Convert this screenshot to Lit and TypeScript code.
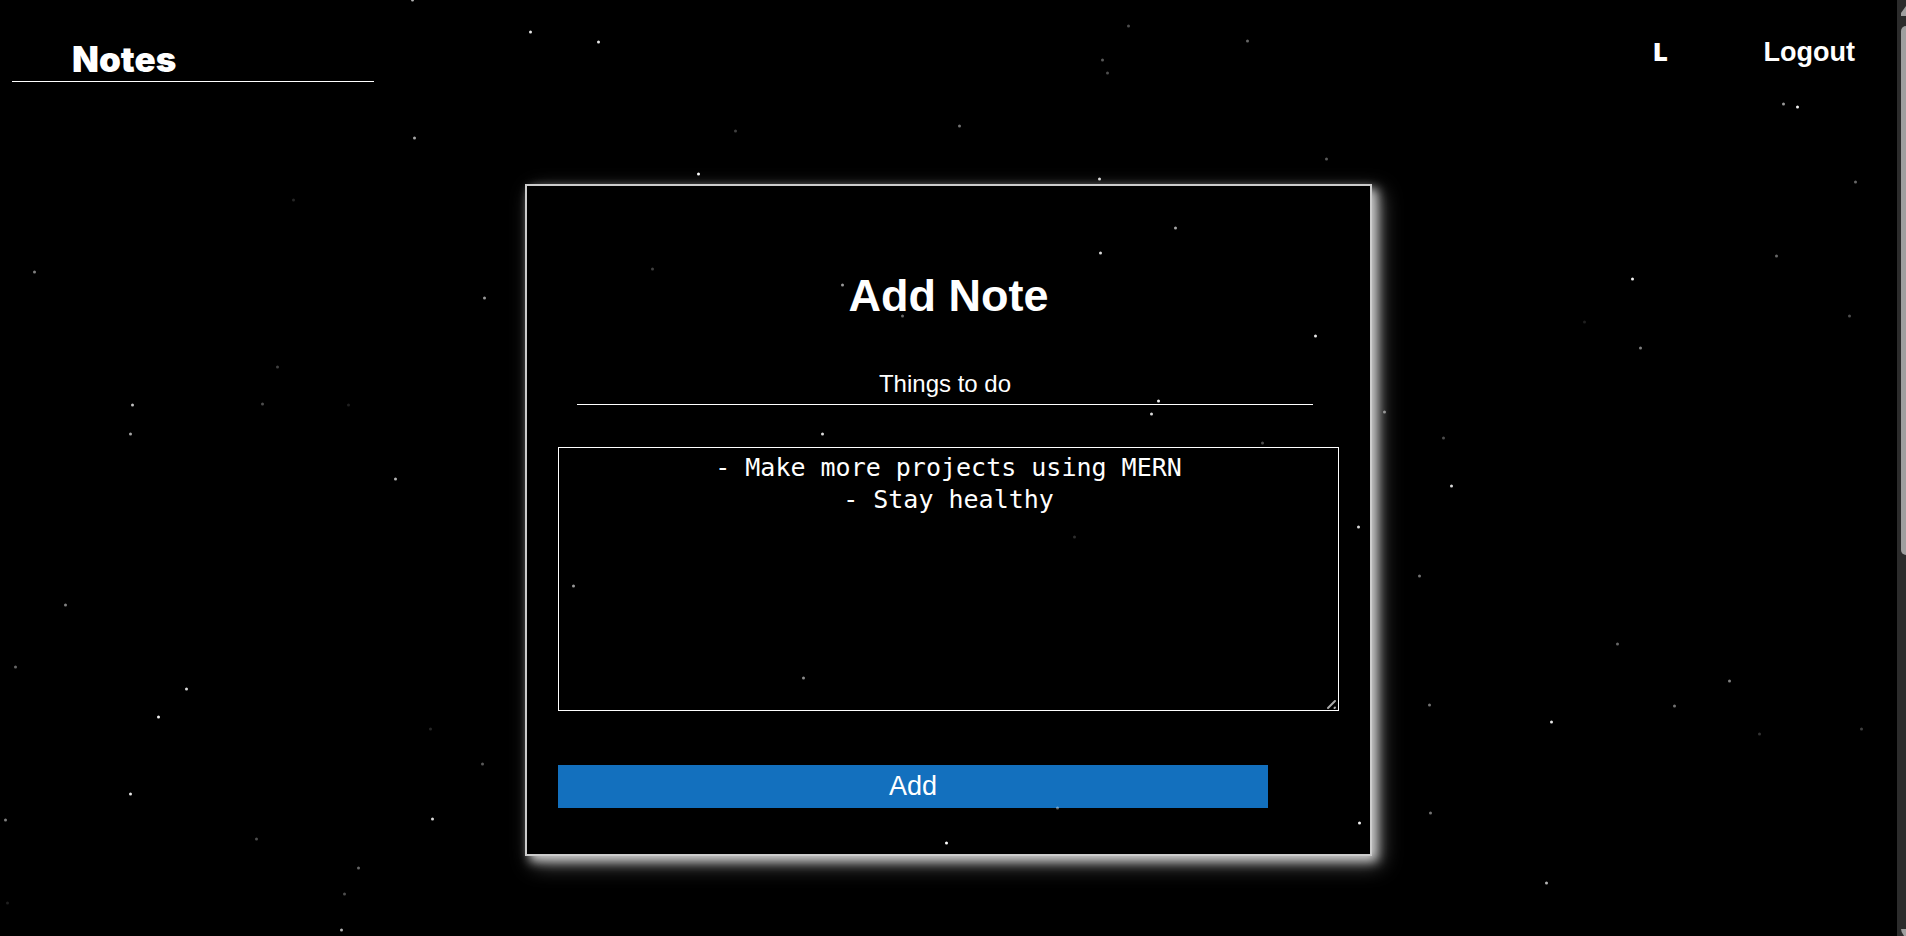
import { LitElement, html, svg, css } from "lit";
import { customElement, state } from "lit/decorators.js";

/** x, y, brightness of every star in the night sky */
const STARS: [number, number, number][] = [
  [412, 0, 0.7], [530, 32, 0.9], [598, 42, 0.9], [1128, 26, 0.3], [1102, 60, 0.35], [1107, 73, 0.3],
  [1247, 41, 0.4], [414, 138, 0.65], [735, 131, 0.25], [959, 126, 0.45], [1326, 159, 0.35],
  [698, 174, 1], [1099, 179, 0.85], [1783, 104, 0.6], [1797, 107, 0.95], [1855, 182, 0.4],
  [293, 200, 0.15], [34, 272, 0.5], [484, 298, 0.6], [652, 269, 0.25], [842, 285, 0.6],
  [902, 316, 0.4], [1175, 228, 0.65], [1100, 253, 0.85], [1315, 336, 0.9], [1776, 256, 0.4],
  [1632, 279, 0.95], [1849, 316, 0.3], [1584, 322, 0.12], [1640, 348, 0.5], [277, 367, 0.25],
  [132, 405, 0.75], [262, 404, 0.3], [348, 405, 0.12], [130, 434, 0.65], [395, 479, 0.7],
  [822, 434, 0.85], [1158, 401, 0.95], [1151, 414, 0.85], [1384, 412, 0.5], [1262, 443, 0.3],
  [1443, 438, 0.3], [1451, 486, 0.85], [1358, 527, 0.85], [1419, 576, 0.45], [1074, 537, 0.18],
  [573, 586, 0.6], [65, 605, 0.5], [15, 667, 0.4], [186, 689, 0.85], [158, 717, 0.95],
  [430, 729, 0.15], [482, 764, 0.35], [130, 794, 0.9], [432, 819, 0.85], [5, 820, 0.5],
  [256, 839, 0.3], [358, 868, 0.4], [344, 894, 0.3], [7, 903, 0.12], [341, 930, 0.7],
  [803, 678, 0.55], [1057, 808, 0.4], [946, 843, 1], [1359, 823, 0.95], [1429, 705, 0.45],
  [1430, 813, 0.45], [1551, 722, 0.9], [1617, 644, 0.4], [1674, 706, 0.45], [1729, 681, 0.5],
  [1759, 734, 0.2], [1861, 729, 0.25], [1546, 883, 0.7],
];

@customElement("star-field")
export class StarField extends LitElement {
  static styles = css`
    :host {
      position: absolute;
      inset: 0;
      overflow: hidden;
      pointer-events: none;
    }
    .sky {
      display: block;
      width: 100%;
      height: 100%;
      fill: #fff;
    }
  `;

  render() {
    return html`<svg class="sky" viewBox="0 0 1897 936" preserveAspectRatio="xMidYMin slice" aria-hidden="true">
      ${STARS.map(([x, y, o]) => svg`<circle cx=${x + 0.5} cy=${y} r="1.5" opacity=${o} />`)}
    </svg>`;
  }
}

@customElement("app-root")
export class AppRoot extends LitElement {
  @state() private noteTitle = "Things to do";
  @state() private noteBody = "- Make more projects using MERN\n- Stay healthy";

  static styles = css`
    :host {
      display: grid;
      grid-template-columns: minmax(0, 1fr) 9px;
      min-height: 100vh;
      background: #000;
      color: #fff;
      color-scheme: dark;
      font-family: "Liberation Sans", Arial, sans-serif;
    }
    .page {
      position: relative;
      display: flex;
      flex-direction: column;
      overflow: hidden;
    }
    .bar {
      display: flex;
      justify-content: space-between;
      align-items: flex-start;
      padding: 32px 42px 0 12px;
    }
    .brand {
      box-sizing: border-box;
      width: 362px;
      padding: 8px 60px 3px;
      border-bottom: 1px solid #fff;
      color: #fff;
      font: 900 35px/38px "Arial Black", Inter, sans-serif;
      text-decoration: none;
    }
    .links {
      display: flex;
      align-items: baseline;
      gap: 96px;
      padding-top: 4px;
    }
    .user {
      font: 900 25px/32px "Arial Black", Inter, sans-serif;
    }
    .logout {
      padding: 0;
      border: 0;
      background: none;
      color: #fff;
      font: bold 27px/32px "Liberation Sans", Arial, sans-serif;
    }
    .card {
      box-sizing: border-box;
      display: flex;
      flex-direction: column;
      width: 92%;
      max-width: 847px;
      margin: 102px auto 80px;
      padding: 84px 31px 46px;
      border: 2px solid #ccc;
      box-shadow: 5px 5px 10px #ccc, 8px 8px 20px #666;
    }
    .heading {
      margin: 0;
      font-size: 45px;
      line-height: 52px;
      text-align: center;
    }
    .title {
      margin: 44px 26px 0 19px;
      padding: 2px 0 4px;
      border: 0;
      border-bottom: 1px solid #fff;
      border-radius: 0;
      background: none;
      color: #fff;
      font: 24px/32px "Liberation Sans", Arial, sans-serif;
      text-align: center;
    }
    .body {
      box-sizing: border-box;
      height: 264px;
      margin-top: 42px;
      padding: 4px 2px;
      border: 1px solid #fff;
      background: none;
      color: #fff;
      font: 25px/32px Consolas, "DejaVu Sans Mono", monospace;
      text-align: center;
      resize: both;
    }
    .body::-webkit-resizer {
      background: url("data:image/svg+xml,%3Csvg xmlns='http://www.w3.org/2000/svg' width='15' height='15' stroke='%23aaa' stroke-width='2' stroke-linecap='round'%3E%3Cpath d='M5 13 12 6M11.5 13 12 12.5'/%3E%3C/svg%3E")
        right bottom no-repeat;
    }
    .add {
      width: calc(100% - 71px);
      margin-top: 54px;
      padding: 5px 0 6px;
      border: 0;
      background: #1370be;
      color: #fff;
      font: 27px/32px "Liberation Sans", Arial, sans-serif;
    }
    .scroll {
      display: flex;
      flex-direction: column;
      overflow: hidden;
      background: #2c2c2c;
      padding-left: 4px;
    }
    .arrow {
      display: block;
      flex: none;
      width: 10px;
      fill: #9f9f9f;
    }
    .up {
      height: 26px;
    }
    .down {
      height: 7px;
    }
    .track {
      flex: 1;
    }
    .thumb {
      width: 10px;
      height: 58.6%;
      border-radius: 5px;
      background: #9f9f9f;
    }
  `;

  private addNote(event: Event) {
    event.preventDefault();
  }

  render() {
    return html`
      <div class="page">
        <star-field></star-field>
        <header class="bar">
          <a class="brand" href="#">Notes</a>
          <nav class="links">
            <span class="user">L</span>
            <button class="logout" type="button">Logout</button>
          </nav>
        </header>
        <form class="card" @submit=${this.addNote}>
          <h1 class="heading">Add Note</h1>
          <input
            class="title"
            type="text"
            aria-label="Title"
            .value=${this.noteTitle}
            @input=${(e: Event) => (this.noteTitle = (e.target as HTMLInputElement).value)}
          />
          <textarea
            class="body"
            aria-label="Note"
            spellcheck="false"
            .value=${this.noteBody}
            @input=${(e: Event) => (this.noteBody = (e.target as HTMLTextAreaElement).value)}
          ></textarea>
          <button class="add" type="submit">Add</button>
        </form>
      </div>
      <div class="scroll" aria-hidden="true">
        <svg class="arrow up" viewBox="0 0 10 26"><path d="M5 6 10 14Q10 16 8 16H0Q-1 15 0 13Z" /></svg>
        <div class="track"><div class="thumb"></div></div>
        <svg class="arrow down" viewBox="0 0 10 7"><path d="M0 0H10V7H3Q0 3 0 0Z" /></svg>
      </div>
    `;
  }
}
